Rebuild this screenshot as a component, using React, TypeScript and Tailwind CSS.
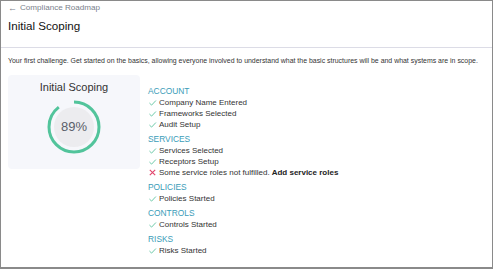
const font = { fontFamily: '"Liberation Sans", Arial, sans-serif' };

type Item = { label: string; ok: boolean; action?: string };
type Section = { title: string; items: Item[] };

const sections: Section[] = [
  {
    title: 'ACCOUNT',
    items: [
      { label: 'Company Name Entered', ok: true },
      { label: 'Frameworks Selected', ok: true },
      { label: 'Audit Setup', ok: true },
    ],
  },
  {
    title: 'SERVICES',
    items: [
      { label: 'Services Selected', ok: true },
      { label: 'Receptors Setup', ok: true },
      { label: 'Some service roles not fulfilled.', ok: false, action: 'Add service roles' },
    ],
  },
  { title: 'POLICIES', items: [{ label: 'Policies Started', ok: true }] },
  { title: 'CONTROLS', items: [{ label: 'Controls Started', ok: true }] },
  { title: 'RISKS', items: [{ label: 'Risks Started', ok: true }] },
];

const Check = () => (
  <svg width="9" height="9" viewBox="0 0 10 10" className="shrink-0">
    <path d="M1.6 5.6 L4 7.9 L8.8 2.8" fill="none" stroke="#5cc49f" strokeWidth="1" />
  </svg>
);

const Cross = () => (
  <svg width="9" height="9" viewBox="0 0 10 10" className="shrink-0">
    <path d="M2 2 L8 8 M8 2 L2 8" fill="none" stroke="#e2476e" strokeWidth="1.3" />
  </svg>
);

const ProgressRing = ({ value }: { value: number }) => {
  const r = 25;
  const c = 2 * Math.PI * r;
  return (
    <svg width="56" height="56" viewBox="0 0 56 56">
      <circle cx="28" cy="28" r="20" fill="#ececef" />
      <circle
        cx="28"
        cy="28"
        r={r}
        fill="none"
        stroke="#52c49b"
        strokeWidth="3"
        strokeDasharray={`${(value / 100) * c} ${c}`}
        transform="rotate(-90 28 28)"
      />
      <text x="28" y="28.5" textAnchor="middle" dominantBaseline="middle" fontSize="13" fill="#5b5f6a" style={font}>
        {value}%
      </text>
    </svg>
  );
};

export default function App() {
  return (
    <div className="w-[493px] h-[269px] bg-white border border-[#8a8a8a] border-b-2 overflow-hidden" style={font}>
      <div className="px-[7px] pt-[1px] h-[47px] border-b border-[#dcdce6]">
        <div className="flex items-center gap-[3px] text-[8.1px] text-[#7a7f8c] leading-[12px]">
          <span className="text-[9px]">←</span>
          <span>Compliance Roadmap</span>
        </div>
        <div className="text-[11.6px] text-[#111] mt-[4px] leading-[16px]">Initial Scoping</div>
      </div>
      <div className="px-[7px] pt-[8px] text-[6.95px] text-[#333] leading-[10px] whitespace-nowrap">
        Your first challenge. Get started on the basics, allowing everyone involved to understand what the basic structures will be and what systems are in scope.
      </div>
      <div className="flex gap-[8px] px-[7px] pt-[9px]">
        <div className="w-[132px] h-[94px] bg-[#f6f7fb] rounded-[4px] flex flex-col items-center pt-[5px]">
          <div className="text-[11px] text-[#333] leading-[14px]">Initial Scoping</div>
          <div className="mt-[5px]">
            <ProgressRing value={89} />
          </div>
        </div>
        <div className="flex flex-col gap-[4px] pt-[11px]">
          {sections.map((s) => (
            <div key={s.title}>
              <div className="text-[8.4px] text-[#3a9cb8] leading-[11px]">{s.title}</div>
              {s.items.map((it) => (
                <div key={it.label} className="flex items-center gap-[2px] text-[8px] text-[#333] leading-[11px]">
                  {it.ok ? <Check /> : <Cross />}
                  <span>
                    {it.label}
                    {it.action && <span className="font-bold text-[#222]"> {it.action}</span>}
                  </span>
                </div>
              ))}
            </div>
          ))}
        </div>
      </div>
    </div>
  );
}
